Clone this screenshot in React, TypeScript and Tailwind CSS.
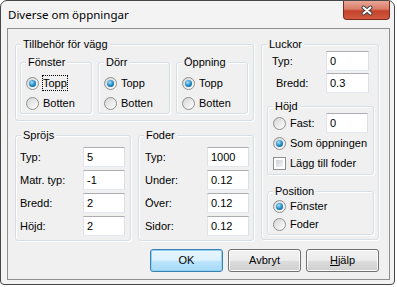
import type { ReactNode } from 'react';

function Group({ label, className, children }: { label: string; className: string; children?: ReactNode }) {
  return (
    <div className={`relative border border-[#d5dfe5] rounded-[3px] shadow-[inset_1px_1px_0_#ffffff,1px_1px_0_#ffffff] ${className}`}>
      <span className="absolute top-[-8px] left-[5px] px-[2px] bg-[#f0f0f0] leading-[14px] whitespace-nowrap">{label}</span>
      {children}
    </div>
  );
}

function Radio({ label, checked, focus }: { label: string; checked?: boolean; focus?: boolean }) {
  return (
    <div className="flex items-center h-[16px] gap-[3px]">
      <span className="w-[13px] h-[13px] shrink-0 rounded-full border border-[#8e8f8f] bg-[linear-gradient(135deg,#d4d4d4,#ffffff)] flex items-center justify-center">
        {checked && (
          <span className="w-[7px] h-[7px] rounded-full bg-[radial-gradient(circle_at_40%_35%,#a8e4fc,#1b84c2_55%,#0c4a78)]" />
        )}
      </span>
      <span
        className={`leading-[14px] border whitespace-nowrap ${focus ? 'border-dotted border-black' : 'border-transparent'}`}
      >
        {label}
      </span>
    </div>
  );
}

function Field({ value, w = 'w-[42px]' }: { value: string; w?: string }) {
  return (
    <div
      className={`${w} h-[20px] shrink-0 bg-white border border-[#abadb3] border-l-[#e2e3ea] border-r-[#dbdfe6] border-b-[#e3e9ef] pl-[3px] flex items-center`}
    >
      {value}
    </div>
  );
}

function Button({ children, primary }: { children: ReactNode; primary?: boolean }) {
  return (
    <div
      className={`w-[73px] h-[23px] rounded-[3px] border flex items-center justify-center ${
        primary
          ? 'border-[#3c7fb1] bg-[linear-gradient(#eaf6fd_0%,#d9f0fc_50%,#bee6fd_50%,#a7d9f5_100%)] shadow-[inset_0_0_0_1px_#8fd3f5]'
          : 'border-[#707070] bg-[linear-gradient(#f2f2f2_0%,#ebebeb_50%,#dddddd_50%,#cfcfcf_100%)] shadow-[inset_0_0_0_1px_#fcfcfc]'
      }`}
    >
      {children}
    </div>
  );
}

const sprojs = [
  ['Typ:', '5'],
  ['Matr. typ:', '-1'],
  ['Bredd:', '2'],
  ['Höjd:', '2'],
];

const foder = [
  ['Typ:', '1000'],
  ['Under:', '0.12'],
  ['Över:', '0.12'],
  ['Sidor:', '0.12'],
];

export default function App() {
  return (
    <div className="w-[397px] h-[287px] bg-white font-['Liberation_Sans',Arial,sans-serif] text-[11px] text-black">
      <div className="w-[395px] h-[285px] border border-[#474747] rounded-t-[7px] rounded-b-[4px] bg-[#f3f3f3] flex flex-col">
        {/* title bar */}
        <div className="h-[27px] flex pl-[7px] pr-[4px]">
          <span className="self-center font-['Noto_Sans',sans-serif] text-[11.5px] leading-[16px]">Diverse om öppningar</span>
          <div className="ml-auto w-[47px] h-[19px] rounded-b-[4px] border border-t-0 border-[#7a2c1f] bg-[linear-gradient(#e9a797,#d87c67_45%,#c4432a_55%,#cf5a3f)] flex items-center justify-center">
            <svg width="14" height="11" viewBox="0 0 14 11">
              <path d="M3.5 2.5 L10.5 8.5 M10.5 2.5 L3.5 8.5" stroke="#404040" strokeWidth="4" strokeLinecap="round" />
              <path d="M3.5 2.5 L10.5 8.5 M10.5 2.5 L3.5 8.5" stroke="#ffffff" strokeWidth="2" strokeLinecap="round" />
            </svg>
          </div>
        </div>

        {/* client area */}
        <div className="pl-[6px] pr-[4px]">
          <div className="h-[252px] border border-[#8e8f8f] bg-[#f0f0f0] pt-[15px] pl-[7px] pr-[10px]">
            <div className="flex gap-[7px]">
              <div className="w-[239px] flex flex-col">
                <Group label="Tillbehör för vägg" className="h-[77px] pt-[17px] pl-[4px] flex gap-[6px]">
                  {['Fönster', 'Dörr', 'Öppning'].map((name, i) => (
                    <Group key={name} label={name} className="w-[72px] h-[52px] pt-[12px] pl-[5px] flex flex-col gap-[4px]">
                      <Radio label="Topp" checked focus={i === 0} />
                      <Radio label="Botten" />
                    </Group>
                  ))}
                </Group>

                <div className="mt-[14px] flex gap-[7px]">
                  <Group label="Spröjs" className="w-[116px] h-[106px] pt-[11px] pl-[4px] flex flex-col gap-[3px]">
                    {sprojs.map(([l, v]) => (
                      <div key={l} className="h-[20px] flex items-center">
                        <span className="w-[63px]">{l}</span>
                        <Field value={v} />
                      </div>
                    ))}
                  </Group>
                  <Group label="Foder" className="w-[116px] h-[106px] pt-[11px] pl-[6px] flex flex-col gap-[3px]">
                    {foder.map(([l, v]) => (
                      <div key={l} className="h-[20px] flex items-center">
                        <span className="w-[62px]">{l}</span>
                        <Field value={v} />
                      </div>
                    ))}
                  </Group>
                </div>
              </div>

              <Group label="Luckor" className="w-[119px] h-[196px] pt-[6px] flex flex-col">
                <div className="h-[20px] flex items-center">
                  <span className="w-[64px] pl-[10px]">Typ:</span>
                  <Field value="0" w="w-[43px]" />
                </div>
                <div className="mt-[2px] h-[20px] flex items-center">
                  <span className="w-[64px] pl-[14px]">Bredd:</span>
                  <Field value="0.3" w="w-[43px]" />
                </div>

                <Group label="Höjd" className="mt-[13px] ml-[5px] w-[107px] h-[69px] pt-[6px] pl-[5px] flex flex-col">
                  <div className="h-[20px] flex items-center">
                    <div className="w-[53px]">
                      <Radio label="Fast:" />
                    </div>
                    <Field value="0" />
                  </div>
                  <div className="mt-[2px]">
                    <Radio label="Som öppningen" checked />
                  </div>
                  <div className="mt-[4px] flex items-center h-[16px] gap-[3px]">
                    <span className="w-[13px] h-[13px] border border-[#8e8f8f] bg-white p-[2px]">
                      <span className="block w-full h-full bg-[linear-gradient(135deg,#cbcfd5,#f7f7f7)]" />
                    </span>
                    <span className="leading-[14px] border border-transparent whitespace-nowrap">Lägg till foder</span>
                  </div>
                </Group>

                <Group label="Position" className="mt-[16px] ml-[5px] w-[107px] h-[44px] pt-[6px] pl-[5px] flex flex-col gap-[2px]">
                  <Radio label="Fönster" checked />
                  <Radio label="Foder" />
                </Group>
              </Group>
            </div>

            <div className="mt-[8px] flex justify-end gap-[5px]">
              <Button primary>OK</Button>
              <Button>Avbryt</Button>
              <Button>
                <span>
                  <span className="underline">H</span>jälp
                </span>
              </Button>
            </div>
          </div>
        </div>
      </div>
    </div>
  );
}
